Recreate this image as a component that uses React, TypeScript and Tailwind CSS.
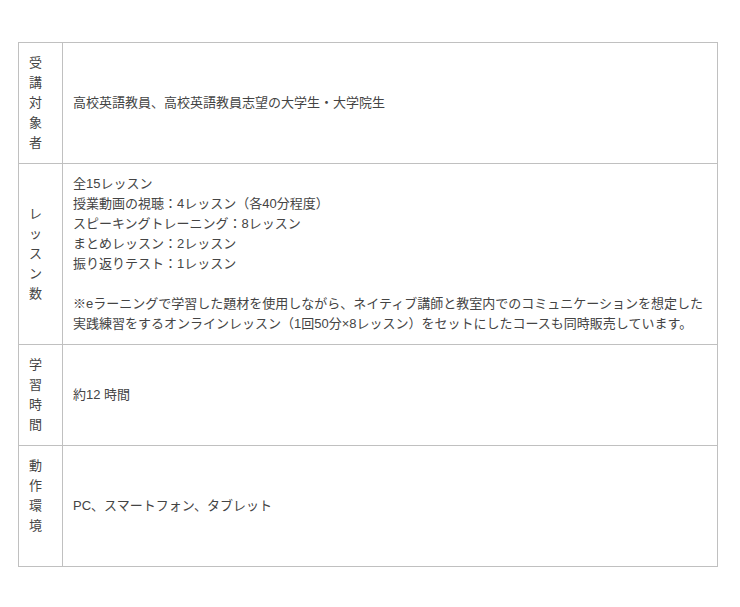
const rows: { label: string[]; lines: string[] }[] = [
  { label: ["受", "講", "対", "象", "者"], lines: ["高校英語教員、高校英語教員志望の大学生・大学院生"] },
  {
    label: ["レ", "ッ", "ス", "ン", "数"],
    lines: [
      "全15レッスン",
      "授業動画の視聴：4レッスン（各40分程度）",
      "スピーキングトレーニング：8レッスン",
      "まとめレッスン：2レッスン",
      "振り返りテスト：1レッスン",
      "",
      "※eラーニングで学習した題材を使用しながら、ネイティブ講師と教室内でのコミュニケーションを想定した",
      "実践練習をするオンラインレッスン（1回50分×8レッスン）をセットにしたコースも同時販売しています。",
    ],
  },
  { label: ["学", "習", "時", "間"], lines: ["約12 時間"] },
  { label: ["動", "作", "環", "境", ""], lines: ["PC、スマートフォン、タブレット"] },
];

export default function App() {
  return (
    <div className="min-h-[607px] bg-white pt-[42px] pl-[18px]">
      <div
        className="w-[700px] border-l border-t border-[#c0c0c0] text-[13px] leading-[20px] text-[#444]"
        style={{ fontFamily: '"Liberation Sans", "Noto Sans CJK JP", sans-serif' }}
      >
        {rows.map((row, i) => (
          <div key={i} className="flex">
            {/* label cell, one character per line */}
            <div className="flex w-[44px] shrink-0 items-center border-b border-r border-[#c0c0c0] px-[10px] py-[10px]">
              <div>
                {row.label.map((c, j) => (
                  <div key={j} className="h-[20px]">
                    {c}
                  </div>
                ))}
              </div>
            </div>
            <div className="flex flex-1 items-center border-b border-r border-[#c0c0c0] px-[10px] py-[10px]">
              <div>
                {row.lines.map((l, j) => (
                  <div key={j} className="h-[20px] whitespace-nowrap">
                    {l}
                  </div>
                ))}
              </div>
            </div>
          </div>
        ))}
      </div>
    </div>
  );
}
